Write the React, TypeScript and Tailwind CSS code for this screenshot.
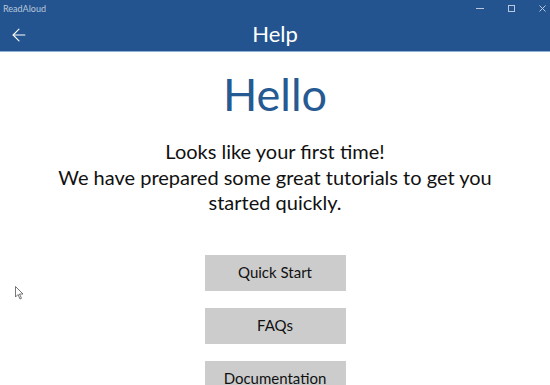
import { ArrowLeft } from "lucide-react";

const font = { fontFamily: 'Lato, "Open Sans", sans-serif' };

const HelpButton = ({ label }: { label: string }) => (
  <button className="w-[141px] h-[36px] bg-[#cccccc] text-[15px] text-[#111] flex items-center justify-center">
    {label}
  </button>
);

export default function App() {
  return (
    <div className="w-[550px] h-[385px] overflow-hidden bg-white relative" style={font}>
      {/* title bar */}
      <div className="bg-[#235490] h-[16px] flex items-center justify-between pl-[3px] pr-[4px]">
        <span className="text-[9px] text-[#b8c7da] leading-none">ReadAloud</span>
        <div className="flex items-center gap-[24px]">
          <div className="w-[8px] h-px bg-[#b9c9dd]" />
          <div className="w-[7px] h-[7px] border border-[#b9c9dd]" />
          <svg width="7" height="7" viewBox="0 0 7 7">
            <path d="M0.5 0.5L6.5 6.5M6.5 0.5L0.5 6.5" stroke="#b9c9dd" strokeWidth="1" />
          </svg>
        </div>
      </div>
      {/* header */}
      <div className="bg-[#235490] h-[36px] relative flex items-center justify-center border-b border-[#8fb0d6]">
        <ArrowLeft className="absolute left-[9px] top-[9px] text-white" size={20} strokeWidth={1.3} />
        <span className="text-white text-[22px] leading-none">Help</span>
      </div>

      <div className="flex flex-col items-center">
        <h1 className="text-[#265a92] text-[45px] leading-none mt-[20px]">Hello</h1>
        <p className="text-[20px] leading-[25.5px] text-[#111] text-center mt-[22px]">
          Looks like your first time!
          <br />
          We have prepared some great tutorials to get you
          <br />
          started quickly.
        </p>
        <div className="flex flex-col gap-[17px] mt-[39px]">
          <HelpButton label="Quick Start" />
          <HelpButton label="FAQs" />
          <HelpButton label="Documentation" />
        </div>
      </div>

      {/* mouse pointer */}
      <svg className="absolute left-[15px] top-[286px]" width="9" height="14" viewBox="0 0 9 14">
        <path d="M0.5 0.5V11L3 8.5L5 13L6.5 12.3L4.5 8H8Z" fill="white" stroke="#555" strokeWidth="0.8" />
      </svg>
    </div>
  );
}
